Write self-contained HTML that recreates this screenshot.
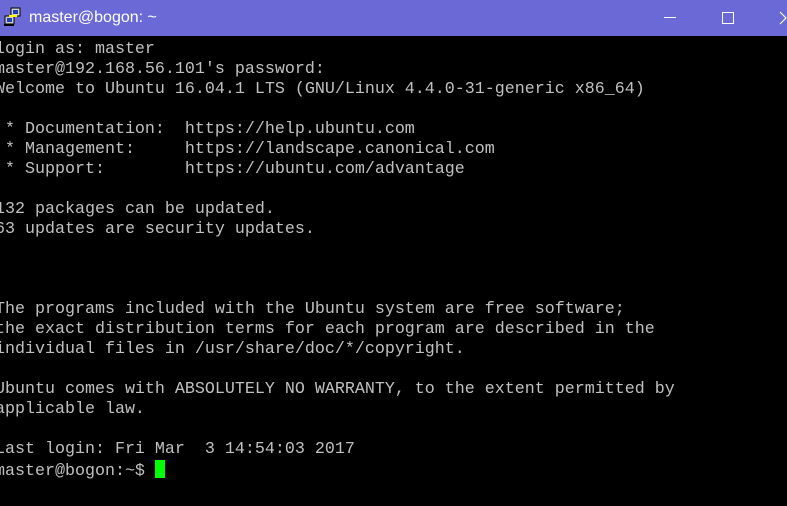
<!DOCTYPE html>
<html><head><style>
html,body{margin:0;padding:0;width:787px;height:506px;overflow:hidden;background:#000;}
.tb{position:absolute;left:0;top:0;width:787px;height:36px;background:#6b69d6;}
.title{position:absolute;left:29px;top:9px;color:#fff;font:16px "Liberation Sans",sans-serif;}
pre{position:absolute;left:-5px;top:40px;margin:0;font:16.67px/20px "Liberation Mono",monospace;color:#c0c0c0;}
.cur{display:inline-block;width:10px;height:18px;background:#00ff00;vertical-align:-3px;}
</style></head><body>
<div class="tb">
<svg style="position:absolute;left:3px;top:7px" width="20" height="20" viewBox="0 0 20 20">
<rect x="8" y="1" width="9" height="8" fill="#ccc" stroke="#000"/><rect x="10" y="3" width="5" height="4" fill="#2040b0"/>
<rect x="2" y="9" width="9" height="8" fill="#ccc" stroke="#000"/><rect x="4" y="11" width="5" height="4" fill="#2040b0"/>
<path d="M6 9 L14 9" stroke="#ff0" stroke-width="2"/><path d="M1 18h10" stroke="#000" stroke-width="2"/></svg>
<div class="title">master@bogon: ~</div>
<div style="position:absolute;left:664px;top:17px;width:12px;height:1px;background:#fff"></div>
<div style="position:absolute;left:722px;top:12px;width:10px;height:10px;border:1px solid #fff"></div>
<svg style="position:absolute;left:779px;top:11px" width="10" height="14"><path d="M1 1 L7 7 L1 13" stroke="#fff" fill="none" stroke-width="1.2"/></svg>
</div>
<pre>login as: master
master@192.168.56.101's password:
Welcome to Ubuntu 16.04.1 LTS (GNU/Linux 4.4.0-31-generic x86_64)

 * Documentation:  https://help.ubuntu.com
 * Management:     https://landscape.canonical.com
 * Support:        https://ubuntu.com/advantage

132 packages can be updated.
63 updates are security updates.



The programs included with the Ubuntu system are free software;
the exact distribution terms for each program are described in the
individual files in /usr/share/doc/*/copyright.

Ubuntu comes with ABSOLUTELY NO WARRANTY, to the extent permitted by
applicable law.

Last login: Fri Mar  3 14:54:03 2017
master@bogon:~$ <span class="cur"></span></pre>
</body></html>
